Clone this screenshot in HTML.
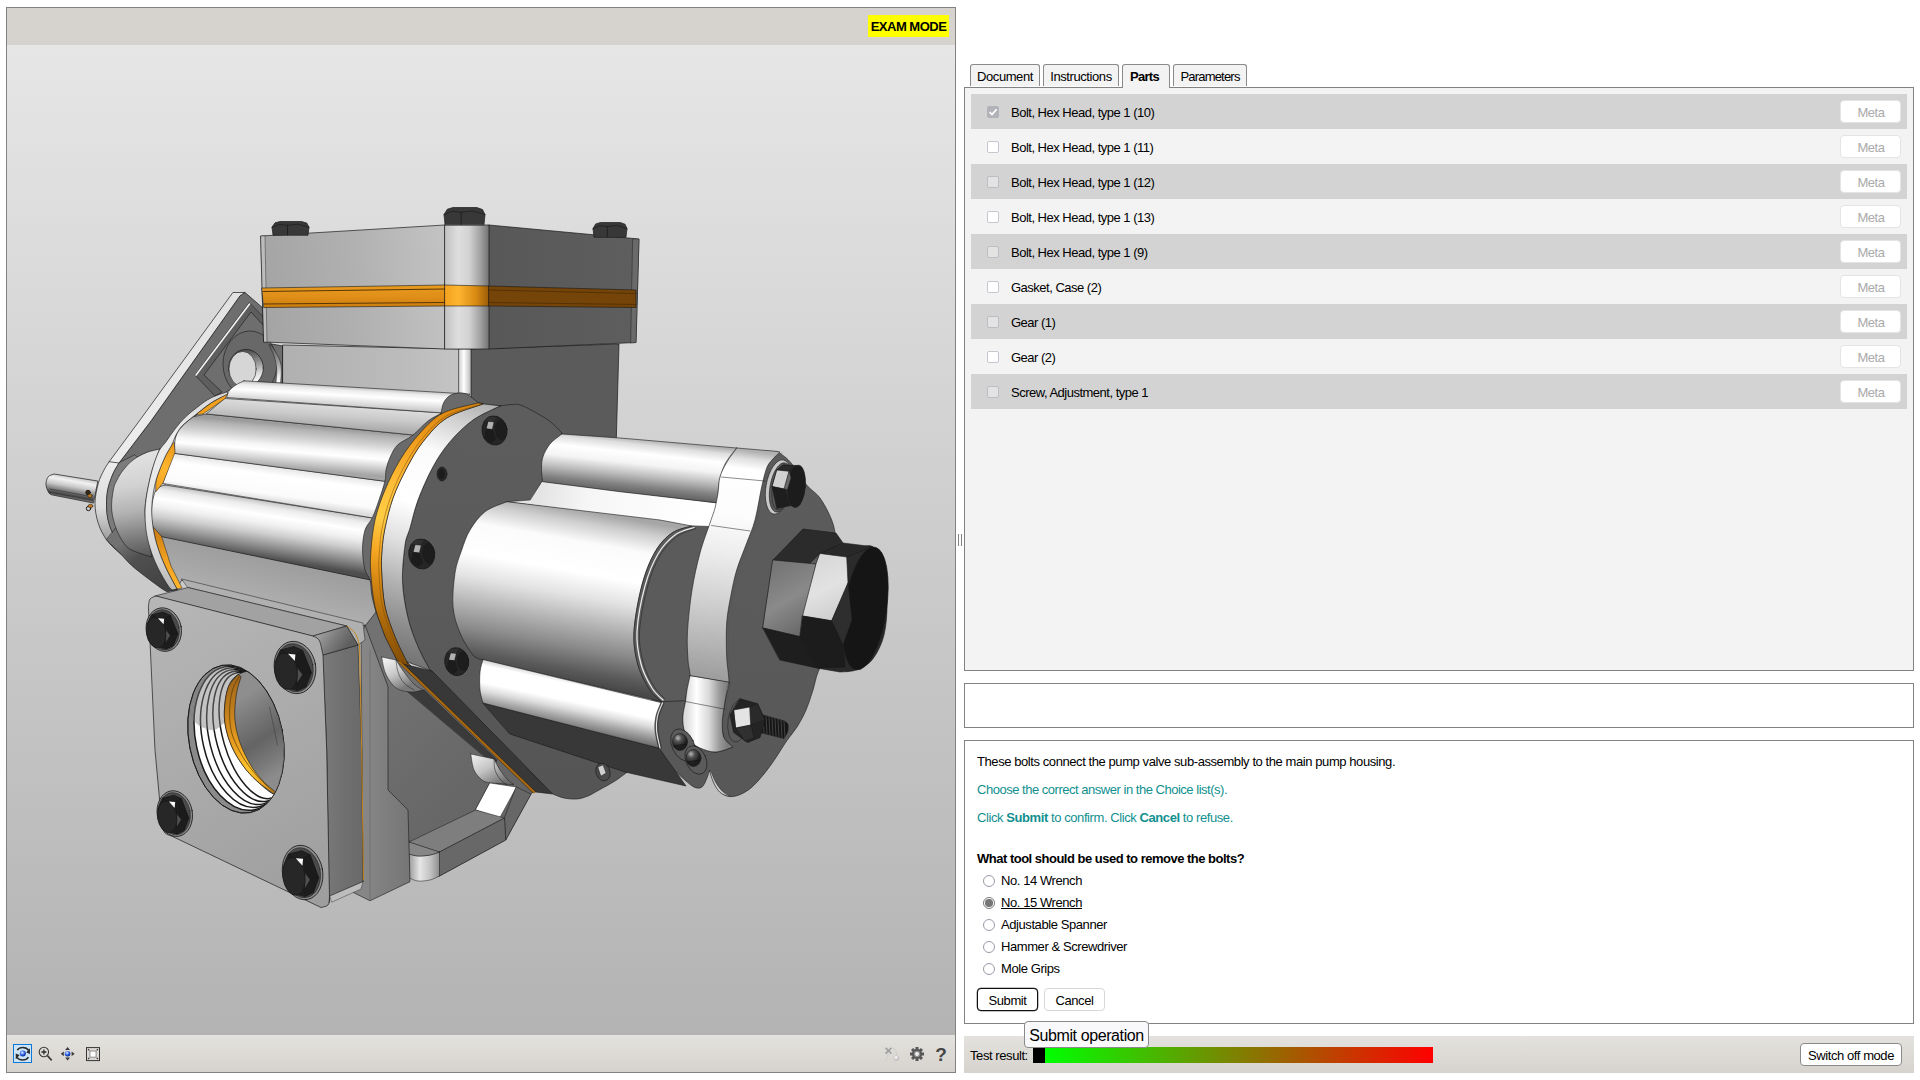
<!DOCTYPE html>
<html lang="en">
<head>
<meta charset="utf-8">
<title>Exam Mode - Pump Assembly</title>
<style>
*{box-sizing:border-box;margin:0;padding:0}
html,body{width:1920px;height:1080px;overflow:hidden;background:#fff}
body{font-family:"Liberation Sans",sans-serif;font-size:13px;letter-spacing:-0.42px;color:#000;position:relative}
.abs{position:absolute}
/* left panel */
#left{position:absolute;left:6px;top:7px;width:950px;height:1066px;border:1px solid #828282;background:#d6d3ce;overflow:hidden}
#lhead{position:absolute;left:0;top:0;width:948px;height:37px;background:#d6d3ce}
#exam{position:absolute;left:861px;top:7px;width:81px;height:22px;background:#ffff00;font-weight:bold;font-size:13px;letter-spacing:-0.5px;line-height:23px;text-align:center;color:#000}
#view{position:absolute;left:0;top:37px;width:948px;height:990px;background:linear-gradient(#e6e6e6,#b3b3b3);overflow:hidden}
#ltool{position:absolute;left:0;top:1027px;width:948px;height:37px;background:linear-gradient(#e4e2de,#d6d3ce)}
#model{position:absolute;left:-7px;top:-45px;width:1920px;height:1080px}
/* splitter */
.grip{position:absolute;top:534px;width:1px;height:12px;background:#808080}
/* tabs */
.tab{position:absolute;top:64px;height:22px;border:1px solid #8a8a8a;border-bottom:none;border-radius:3px 3px 0 0;background:#f3f3f3;line-height:23px;text-align:center;font-size:13px}
.tab.on{height:24px;font-weight:bold;z-index:3;background:#f3f3f3;letter-spacing:-0.55px}
#parts{position:absolute;left:964px;top:87px;width:950px;height:584px;border:1px solid #828282;background:#f3f3f3}
.row{position:absolute;left:6px;width:936px;height:35px}
.row.d{background:#d3d3d3}
.row .cb{position:absolute;left:16px;top:12px;width:12px;height:12px;border:1px solid #c6c6cf;border-radius:2px;background:#fff}
.row.d .cb{background:#e3e3e3;border-color:#bdbdc4}
.row .cb.ck{background:#b2b2b9;border-color:#b2b2b9}
.row .lb{position:absolute;left:40px;top:0;line-height:37px;white-space:nowrap;letter-spacing:-0.5px}
.row .meta{position:absolute;left:869px;top:6px;width:61px;height:23px;border:1px solid #e4e4e4;border-radius:4px;background:#fff;color:#aaa;text-align:center;line-height:23px;text-indent:1px}
.box{position:absolute;left:964px;width:950px;border:1px solid #828282;background:#fff}
.q{position:absolute;left:12px;white-space:nowrap;line-height:16px}
.teal{color:#11908f}
.rad{position:absolute;left:18px;width:12px;height:12px;border:1px solid #9a9aa8;border-radius:50%;background:#fff}
.rad.on{border-color:#7a7a7a}
.rad.on:after{content:"";position:absolute;left:1.3px;top:1.3px;width:7.4px;height:7.4px;border-radius:50%;background:#767676}
.opt{position:absolute;left:36px;white-space:nowrap;line-height:16px}
.btn{position:absolute;height:23px;border:1px solid #d8d8d8;border-radius:4px;background:#fff;text-align:center;line-height:23px;white-space:nowrap}
#rbar{position:absolute;left:964px;top:1036px;width:950px;height:37px;background:linear-gradient(#e4e2de,#d6d3ce)}
#tip{position:absolute;left:1024px;top:1021px;width:125px;height:27px;border:1px solid #8a8a8a;border-radius:4px;background:#f9f9fb;font-size:16px;letter-spacing:-0.4px;line-height:28px;text-align:center;white-space:nowrap;z-index:5}
</style>
</head>
<body>

<!-- ================= LEFT: 3D viewer ================= -->
<div id="left">
  <div id="lhead"><div id="exam">EXAM MODE</div></div>
  <div id="view">
<svg id="model" viewBox="0 0 1920 1080" width="1920" height="1080" stroke-linejoin="round" stroke-linecap="round">
<defs>
<linearGradient id="gFl" gradientUnits="userSpaceOnUse" x1="0" y1="300" x2="0" y2="566"><stop offset="0" stop-color="#e2e2e2"/><stop offset="0.5" stop-color="#ececec"/><stop offset="0.62" stop-color="#ececec"/><stop offset="0.78" stop-color="#dcdcdc"/><stop offset="0.88" stop-color="#a8a8a8"/><stop offset="0.95" stop-color="#747474"/><stop offset="1" stop-color="#555555"/></linearGradient>
<linearGradient id="gHw" gradientUnits="userSpaceOnUse" x1="250" y1="350" x2="256" y2="384"><stop offset="0" stop-color="#505050"/><stop offset="0.35" stop-color="#8a8a8a"/><stop offset="0.7" stop-color="#dcdcdc"/><stop offset="1" stop-color="#ffffff"/></linearGradient>
<linearGradient id="gBs" gradientUnits="userSpaceOnUse" x1="0" y1="345" x2="0" y2="383"><stop offset="0" stop-color="#5a5a5a"/><stop offset="0.45" stop-color="#9a9a9a"/><stop offset="0.8" stop-color="#e8e8e8"/><stop offset="1" stop-color="#ffffff"/></linearGradient>
<linearGradient id="gBl" gradientUnits="userSpaceOnUse" x1="283" y1="360" x2="460" y2="360"><stop offset="0" stop-color="#b0b0b0"/><stop offset="0.7" stop-color="#bcbcbc"/><stop offset="1" stop-color="#c4c4c4"/></linearGradient>
<linearGradient id="gRod" gradientUnits="userSpaceOnUse" x1="459" y1="0" x2="471" y2="0"><stop offset="0" stop-color="#cfcfcf"/><stop offset="0.4" stop-color="#ffffff"/><stop offset="1" stop-color="#b8b8b8"/></linearGradient>
<linearGradient id="gVl" gradientUnits="userSpaceOnUse" x1="261" y1="300" x2="445" y2="280"><stop offset="0" stop-color="#a4a4a4"/><stop offset="0.5" stop-color="#b0b0b0"/><stop offset="1" stop-color="#c2c2c2"/></linearGradient>
<linearGradient id="gVr" gradientUnits="userSpaceOnUse" x1="489" y1="0" x2="639" y2="0"><stop offset="0" stop-color="#585858"/><stop offset="1" stop-color="#5e5e5e"/></linearGradient>
<linearGradient id="gPil" gradientUnits="userSpaceOnUse" x1="445" y1="0" x2="489" y2="0"><stop offset="0" stop-color="#c2c2c2"/><stop offset="0.3" stop-color="#dedede"/><stop offset="0.55" stop-color="#d2d2d2"/><stop offset="0.8" stop-color="#a2a2a2"/><stop offset="1" stop-color="#727272"/></linearGradient>
<linearGradient id="gO1" gradientUnits="userSpaceOnUse" x1="0" y1="286" x2="0" y2="307"><stop offset="0" stop-color="#e69a1e"/><stop offset="0.5" stop-color="#e08f18"/><stop offset="1" stop-color="#cc7e0e"/></linearGradient>
<linearGradient id="gO2" gradientUnits="userSpaceOnUse" x1="445" y1="0" x2="489" y2="0"><stop offset="0" stop-color="#f2a21e"/><stop offset="0.3" stop-color="#ffb530"/><stop offset="0.7" stop-color="#d88a12"/><stop offset="1" stop-color="#9a5c08"/></linearGradient>
<linearGradient id="gPin" gradientUnits="userSpaceOnUse" x1="70" y1="476" x2="66" y2="498"><stop offset="0" stop-color="#c4c4c4"/><stop offset="0.2" stop-color="#f2f2f2"/><stop offset="0.45" stop-color="#c8c8c8"/><stop offset="0.7" stop-color="#7a7a7a"/><stop offset="0.88" stop-color="#3c3c3c"/><stop offset="1" stop-color="#8a8a8a"/></linearGradient>
<linearGradient id="gWedge" gradientUnits="userSpaceOnUse" x1="125" y1="540" x2="160" y2="590"><stop offset="0" stop-color="#727272"/><stop offset="0.35" stop-color="#505050"/><stop offset="1" stop-color="#424242"/></linearGradient>
<linearGradient id="gDome" gradientUnits="userSpaceOnUse" x1="125" y1="455" x2="142" y2="558"><stop offset="0" stop-color="#e2e2e2"/><stop offset="0.3" stop-color="#d2d2d2"/><stop offset="0.55" stop-color="#b2b2b2"/><stop offset="0.8" stop-color="#7c7c7c"/><stop offset="1" stop-color="#565656"/></linearGradient>
<linearGradient id="gFlat" gradientUnits="userSpaceOnUse" x1="200" y1="545" x2="190" y2="590"><stop offset="0" stop-color="#9e9e9e"/><stop offset="1" stop-color="#b0b0b0"/></linearGradient>
<linearGradient id="gR5" gradientUnits="userSpaceOnUse" x1="271.5" y1="501.9" x2="262.6" y2="557.9"><stop offset="0" stop-color="#c4c4c4"/><stop offset="0.1" stop-color="#ececec"/><stop offset="0.25" stop-color="#ffffff"/><stop offset="0.4" stop-color="#f0f0f0"/><stop offset="0.57" stop-color="#cecece"/><stop offset="0.75" stop-color="#9a9a9a"/><stop offset="0.88" stop-color="#747474"/><stop offset="1" stop-color="#4e4e4e"/></linearGradient>
<linearGradient id="gR4" gradientUnits="userSpaceOnUse" x1="282.5" y1="467.7" x2="277.9" y2="502.1"><stop offset="0" stop-color="#e6e6e6"/><stop offset="0.25" stop-color="#ffffff"/><stop offset="0.8" stop-color="#fbfbfb"/><stop offset="1" stop-color="#dedede"/></linearGradient>
<linearGradient id="gR3" gradientUnits="userSpaceOnUse" x1="307.5" y1="426.3" x2="303.9" y2="469.5"><stop offset="0" stop-color="#9c9c9c"/><stop offset="0.1" stop-color="#b4b4b4"/><stop offset="0.3" stop-color="#d2d2d2"/><stop offset="0.5" stop-color="#f6f6f6"/><stop offset="0.62" stop-color="#ffffff"/><stop offset="0.8" stop-color="#d6d6d6"/><stop offset="1" stop-color="#a6a6a6"/></linearGradient>
<linearGradient id="gR2" gradientUnits="userSpaceOnUse" x1="335.5" y1="405.9" x2="334.1" y2="426.3"><stop offset="0" stop-color="#dcdcdc"/><stop offset="0.5" stop-color="#cacaca"/><stop offset="1" stop-color="#aeaeae"/></linearGradient>
<linearGradient id="gR1" gradientUnits="userSpaceOnUse" x1="357" y1="387.5" x2="355.9" y2="406.5"><stop offset="0" stop-color="#c2c2c2"/><stop offset="0.18" stop-color="#ececec"/><stop offset="0.45" stop-color="#ffffff"/><stop offset="0.75" stop-color="#e4e4e4"/><stop offset="1" stop-color="#cccccc"/></linearGradient>
<linearGradient id="gOs1" gradientUnits="userSpaceOnUse" x1="175" y1="445" x2="156" y2="490"><stop offset="0" stop-color="#e89818"/><stop offset="0.5" stop-color="#ffb62e"/><stop offset="1" stop-color="#f0a020"/></linearGradient>
<linearGradient id="gOs2" gradientUnits="userSpaceOnUse" x1="153" y1="528" x2="178" y2="588"><stop offset="0" stop-color="#c87a10"/><stop offset="0.5" stop-color="#f0a020"/><stop offset="1" stop-color="#ffb52c"/></linearGradient>
<linearGradient id="gRing" gradientUnits="userSpaceOnUse" x1="200" y1="400" x2="150" y2="590"><stop offset="0" stop-color="#dcdcdc"/><stop offset="0.2" stop-color="#ececec"/><stop offset="0.6" stop-color="#e8e8e8"/><stop offset="0.85" stop-color="#d0d0d0"/><stop offset="1" stop-color="#b0b0b0"/></linearGradient>
<linearGradient id="gDisc" gradientUnits="userSpaceOnUse" x1="500" y1="410" x2="470" y2="780"><stop offset="0" stop-color="#5d5d5d"/><stop offset="0.6" stop-color="#5a5a5a"/><stop offset="1" stop-color="#555555"/></linearGradient>
<linearGradient id="gBand" gradientUnits="userSpaceOnUse" x1="490" y1="405" x2="400" y2="670"><stop offset="0" stop-color="#b0b0b0"/><stop offset="0.1" stop-color="#d4d4d4"/><stop offset="0.22" stop-color="#fbfbfb"/><stop offset="0.42" stop-color="#ffffff"/><stop offset="0.56" stop-color="#e0e0e0"/><stop offset="0.7" stop-color="#b4b4b4"/><stop offset="0.85" stop-color="#8c8c8c"/><stop offset="1" stop-color="#6c6c6c"/></linearGradient>
<linearGradient id="gORing" gradientUnits="userSpaceOnUse" x1="440" y1="405" x2="380" y2="665"><stop offset="0" stop-color="#d88610"/><stop offset="0.15" stop-color="#f09c1c"/><stop offset="0.33" stop-color="#ffbe38"/><stop offset="0.46" stop-color="#ffcc44"/><stop offset="0.58" stop-color="#f6a824"/><stop offset="0.7" stop-color="#d48612"/><stop offset="0.85" stop-color="#a8660a"/><stop offset="1" stop-color="#7e4a06"/></linearGradient>
<linearGradient id="gED" gradientUnits="userSpaceOnUse" x1="780" y1="460" x2="760" y2="790"><stop offset="0" stop-color="#5c5c5c"/><stop offset="1" stop-color="#585858"/></linearGradient>
<linearGradient id="gWeb" gradientUnits="userSpaceOnUse" x1="540" y1="495" x2="700" y2="520"><stop offset="0" stop-color="#e4e4e4"/><stop offset="0.3" stop-color="#f6f6f6"/><stop offset="1" stop-color="#ffffff"/></linearGradient>
<linearGradient id="gUC" gradientUnits="userSpaceOnUse" x1="640" y1="439" x2="634" y2="494"><stop offset="0" stop-color="#b0b0b0"/><stop offset="0.1" stop-color="#dedede"/><stop offset="0.26" stop-color="#ffffff"/><stop offset="0.45" stop-color="#f4f4f4"/><stop offset="0.66" stop-color="#bcbcbc"/><stop offset="0.85" stop-color="#828282"/><stop offset="1" stop-color="#606060"/></linearGradient>
<linearGradient id="gCC" gradientUnits="userSpaceOnUse" x1="590" y1="512" x2="560" y2="680"><stop offset="0" stop-color="#a6a6a6"/><stop offset="0.07" stop-color="#cecece"/><stop offset="0.18" stop-color="#fbfbfb"/><stop offset="0.36" stop-color="#ffffff"/><stop offset="0.5" stop-color="#e2e2e2"/><stop offset="0.65" stop-color="#b4b4b4"/><stop offset="0.8" stop-color="#888888"/><stop offset="0.93" stop-color="#5a5a5a"/><stop offset="1" stop-color="#484848"/></linearGradient>
<linearGradient id="gLC" gradientUnits="userSpaceOnUse" x1="575" y1="680" x2="565" y2="727"><stop offset="0" stop-color="#d8d8d8"/><stop offset="0.1" stop-color="#ffffff"/><stop offset="0.45" stop-color="#ffffff"/><stop offset="0.62" stop-color="#dcdcdc"/><stop offset="0.8" stop-color="#a6a6a6"/><stop offset="1" stop-color="#707070"/></linearGradient>
<linearGradient id="gPl" gradientUnits="userSpaceOnUse" x1="740" y1="450" x2="700" y2="750"><stop offset="0" stop-color="#b2b2b2"/><stop offset="0.025" stop-color="#dedede"/><stop offset="0.06" stop-color="#ffffff"/><stop offset="0.22" stop-color="#fcfcfc"/><stop offset="0.35" stop-color="#ececec"/><stop offset="0.5" stop-color="#d2d2d2"/><stop offset="0.65" stop-color="#b4b4b4"/><stop offset="0.755" stop-color="#9e9e9e"/><stop offset="0.765" stop-color="#9e9e9e"/><stop offset="0.77" stop-color="#ffffff"/><stop offset="0.845" stop-color="#b4b4b4"/><stop offset="0.85" stop-color="#ffffff"/><stop offset="0.92" stop-color="#d0d0d0"/><stop offset="1" stop-color="#848484"/></linearGradient>
<linearGradient id="gLug" gradientUnits="userSpaceOnUse" x1="686" y1="0" x2="728" y2="0"><stop offset="0" stop-color="#dcdcdc"/><stop offset="0.25" stop-color="#ffffff"/><stop offset="0.55" stop-color="#d8d8d8"/><stop offset="0.8" stop-color="#9a9a9a"/><stop offset="1" stop-color="#7a7a7a"/></linearGradient>
<linearGradient id="gCap" gradientUnits="userSpaceOnUse" x1="845" y1="560" x2="890" y2="640"><stop offset="0" stop-color="#2c2c2c"/><stop offset="0.5" stop-color="#242424"/><stop offset="1" stop-color="#2a2a2a"/></linearGradient>
<linearGradient id="gHx1" gradientUnits="userSpaceOnUse" x1="770" y1="570" x2="805" y2="630"><stop offset="0" stop-color="#767676"/><stop offset="0.5" stop-color="#8a8a8a"/><stop offset="1" stop-color="#6a6a6a"/></linearGradient>
<linearGradient id="gHx2" gradientUnits="userSpaceOnUse" x1="815" y1="560" x2="840" y2="615"><stop offset="0" stop-color="#d8d8d8"/><stop offset="0.5" stop-color="#e2e2e2"/><stop offset="1" stop-color="#cfcfcf"/></linearGradient>
<radialGradient id="gBall" gradientUnits="userSpaceOnUse" cx="678" cy="738" r="9"><stop offset="0" stop-color="#b8b8b8"/><stop offset="0.4" stop-color="#555555"/><stop offset="1" stop-color="#1e1e1e"/></radialGradient>
<radialGradient id="gBall2" gradientUnits="userSpaceOnUse" cx="691" cy="754" r="9"><stop offset="0" stop-color="#b8b8b8"/><stop offset="0.4" stop-color="#555555"/><stop offset="1" stop-color="#1e1e1e"/></radialGradient>
<linearGradient id="gLB" gradientUnits="userSpaceOnUse" x1="390" y1="680" x2="520" y2="800"><stop offset="0" stop-color="#727272"/><stop offset="0.5" stop-color="#6a6a6a"/><stop offset="1" stop-color="#646464"/></linearGradient>
<linearGradient id="gBo1" gradientUnits="userSpaceOnUse" x1="385" y1="660" x2="400" y2="690"><stop offset="0" stop-color="#f0f0f0"/><stop offset="0.5" stop-color="#c8c8c8"/><stop offset="1" stop-color="#7a7a7a"/></linearGradient>
<linearGradient id="gBo2" gradientUnits="userSpaceOnUse" x1="470" y1="755" x2="490" y2="790"><stop offset="0" stop-color="#f2f2f2"/><stop offset="0.5" stop-color="#c4c4c4"/><stop offset="1" stop-color="#707070"/></linearGradient>
<linearGradient id="gFt" gradientUnits="userSpaceOnUse" x1="409" y1="0" x2="440" y2="0"><stop offset="0" stop-color="#9a9a9a"/><stop offset="0.35" stop-color="#e6e6e6"/><stop offset="0.7" stop-color="#c0c0c0"/><stop offset="1" stop-color="#8a8a8a"/></linearGradient>
<linearGradient id="gBP" gradientUnits="userSpaceOnUse" x1="365" y1="0" x2="410" y2="0"><stop offset="0" stop-color="#868686"/><stop offset="1" stop-color="#767676"/></linearGradient>
<linearGradient id="gPS" gradientUnits="userSpaceOnUse" x1="323" y1="0" x2="363" y2="0"><stop offset="0" stop-color="#7a7a7a"/><stop offset="0.5" stop-color="#707070"/><stop offset="1" stop-color="#6a6a6a"/></linearGradient>
<linearGradient id="gPC" gradientUnits="userSpaceOnUse" x1="320" y1="632" x2="345" y2="650"><stop offset="0" stop-color="#a0a0a0"/><stop offset="0.5" stop-color="#7c7c7c"/><stop offset="1" stop-color="#5e5e5e"/></linearGradient>
<linearGradient id="gPF" gradientUnits="userSpaceOnUse" x1="160" y1="600" x2="330" y2="900"><stop offset="0" stop-color="#b6b6b6"/><stop offset="0.5" stop-color="#aaaaaa"/><stop offset="1" stop-color="#9e9e9e"/></linearGradient>
<clipPath id="cHole"><ellipse cx="236" cy="739" rx="46.6" ry="74.6" transform="rotate(-11 236 739)"/></clipPath>
<linearGradient id="gBore" gradientUnits="userSpaceOnUse" x1="238" y1="700" x2="284" y2="770"><stop offset="0" stop-color="#8e8e8e"/><stop offset="0.3" stop-color="#767676"/><stop offset="0.55" stop-color="#646464"/><stop offset="0.8" stop-color="#787878"/><stop offset="1" stop-color="#8c8c8c"/></linearGradient>
<linearGradient id="gSeal" gradientUnits="userSpaceOnUse" x1="232" y1="680" x2="266" y2="790"><stop offset="0" stop-color="#a0661a"/><stop offset="0.3" stop-color="#c8841c"/><stop offset="0.55" stop-color="#eaa020"/><stop offset="0.78" stop-color="#ffc42c"/><stop offset="1" stop-color="#e09a1e"/></linearGradient>
</defs>
<path d="M245 292.5L264 309L266 343L283 346L283 384L232 388C226.7 392 210 403.3 200 412C190 420.7 178.7 433.8 172 440C165.3 446.2 164.2 446.9 160 449C155.8 451.1 151.2 450.7 146.7 452.5C142.2 454.3 136.9 457.1 133 460C129.1 462.9 125.7 466.4 123 470C120.3 473.6 118.5 477.5 116.7 481.7C115 485.9 113.5 489.9 112.5 495C111.5 500.1 110.9 506.2 111 512C111.1 517.8 112.7 527 113 530L107 528C107 525 106.6 516.2 106.7 510C106.8 503.8 106.5 496.8 107.5 491C108.5 485.2 110.6 479.7 112.5 475C114.4 470.3 117.9 465 119 463L151.7 420L240 295.8Z" fill="#6e6e6e" stroke="#1a1a1a" stroke-width="0.7"/>
<path d="M233.3 292.5L245 292.5L240 295.8L151.7 420L119 463C117.9 465 114.4 470.3 112.5 475C110.6 479.7 108.5 485.2 107.5 491C106.5 496.8 106.3 504.1 106.7 510C107.1 516 108.1 521.2 110 526.7C111.9 532.2 115.5 538.9 118.3 543.3C121.1 547.7 124.2 550.2 126.7 553.3C129.2 556.4 131.9 560.5 133 562C130.8 560.5 124.4 557 120 553.3C115.6 549.6 110.3 545 106.7 540C103.1 535 100.2 529.4 98.3 523.3C96.3 517.2 95 510 95 503.3C95 496.6 96.8 488.9 98.3 483.3C99.8 477.8 102.2 473.6 104 470C105.8 466.4 108.3 463.1 109.2 461.7L140 420Z" fill="url(#gFl)" stroke="#1a1a1a" stroke-width="0.7"/>
<path d="M109.2 461.7L119 463" fill="none" stroke="#1a1a1a" stroke-width="0.7"/>
<path d="M249 303L195 375L215 396L222 392L204 375L251 312L264 326L264 318Z" fill="#5e5e5e" stroke="#1a1a1a" stroke-width="0.6"/>
<path d="M249.5 304L196 375" fill="none" stroke="#f2f2f2" stroke-width="1.6"/>
<ellipse cx="250" cy="364" rx="27" ry="33" fill="#686868" stroke="#1a1a1a" stroke-width="0.6"/>
<ellipse cx="246" cy="368" rx="17.3" ry="18.6" fill="url(#gHw)" stroke="#1a1a1a" stroke-width="0.7"/>
<ellipse cx="242.6" cy="369" rx="13.6" ry="17.6" fill="#d6d6d6" stroke="#1a1a1a" stroke-width="0.6"/>
<path d="M269 345C269.8 346.8 272.7 352 274 356C275.3 360 276.4 364.5 276.7 369C277 373.5 276.1 380.7 276 383L280.6 383C280.7 380.7 281.5 373 281.3 369C281.1 365 280.9 363 279.3 359C277.7 355 272.8 347.3 271.5 345Z" fill="url(#gBs)" stroke="#1a1a1a" stroke-width="0.5"/>
<path d="M283 345L460 349L460 396L283 386Z" fill="url(#gBl)" stroke="#1a1a1a" stroke-width="0.7"/>
<path d="M471 349L619 344L616 450L560 470L471 420Z" fill="#5b5b5b" stroke="#1a1a1a" stroke-width="0.7"/>
<path d="M459 349L471 349L471 398L459 396Z" fill="url(#gRod)" stroke="#1a1a1a" stroke-width="0.6"/>
<path d="M261 236L445 225L445 349L264 342Z" fill="url(#gVl)" stroke="#1a1a1a" stroke-width="0.7"/>
<path d="M261 236L265 236L267 342L264 342Z" fill="#bcbcbc" stroke="#1a1a1a" stroke-width="0.4"/>
<path d="M489 225L639 239L636 342.5L489 349Z" fill="url(#gVr)" stroke="#1a1a1a" stroke-width="0.7"/>
<path d="M633 239L639 239L636 342.5L631 343Z" fill="#6a6a6a" stroke="#1a1a1a" stroke-width="0.4"/>
<path d="M445 225L489 225L489 349L445 349Z" fill="url(#gPil)" stroke="#1a1a1a" stroke-width="0.7"/>
<path d="M262 288L445 285L445 306L264 307.5Z" fill="url(#gO1)" stroke="#1a1a1a" stroke-width="0.6"/>
<path d="M263 291.5L445 289" fill="none" stroke="#5a3606" stroke-width="1.0"/>
<path d="M264 304L445 302.5" fill="none" stroke="#5a3606" stroke-width="1.0"/>
<path d="M445 285L489 286L489 306L445 306Z" fill="url(#gO2)" stroke="#1a1a1a" stroke-width="0.6"/>
<path d="M489 286L636 290L636 307.5L489 306Z" fill="#744408" stroke="#1a1a1a" stroke-width="0.6"/>
<path d="M489 290L636 293.5" fill="none" stroke="#3a2000" stroke-width="0.5"/>
<path d="M489 302.5L636 304.5" fill="none" stroke="#3a2000" stroke-width="0.5"/>
<path d="M273 235L272 227.2L275 222.8L280.1 221.5L301.6 221.5L306.8 223.1L309 227.2L308 235Z" fill="#383838" stroke="#1a1a1a" stroke-width="0.7"/>
<path d="M287.5 225.3L287.5 235" fill="none" stroke="#111" stroke-width="0.6"/>
<path d="M272 227.2L279.4 224.5L287.5 225.3L297.9 224.2L309 227.2" fill="none" stroke="#111" stroke-width="0.5"/>
<path d="M445 224.5L444 214.6L447.3 209.2L453 207.5L476.8 207.5L482.5 209.5L485 214.6L484 224.5Z" fill="#383838" stroke="#1a1a1a" stroke-width="0.7"/>
<path d="M461.2 212.3L461.2 224.5" fill="none" stroke="#111" stroke-width="0.6"/>
<path d="M444 214.6L452.2 211.2L461.2 212.3L472.7 210.9L485 214.6" fill="none" stroke="#111" stroke-width="0.5"/>
<path d="M594 237L593 228.6L595.7 223.9L600.5 222.5L620.2 222.5L625 224.2L627 228.6L626 237Z" fill="#383838" stroke="#1a1a1a" stroke-width="0.7"/>
<path d="M607.3 226.6L607.3 237" fill="none" stroke="#111" stroke-width="0.6"/>
<path d="M593 228.6L599.8 225.7L607.3 226.6L616.8 225.4L627 228.6" fill="none" stroke="#111" stroke-width="0.5"/>
<path d="M97.5 481L54 474C53 474.5 49.3 475.2 48 477C46.7 478.8 45.8 482.3 46 485C46.2 487.7 47.9 491.3 49 493C50.1 494.7 51.9 494.7 52.5 495L93 503Z" fill="url(#gPin)" stroke="#1a1a1a" stroke-width="0.7"/>
<path d="M50 489L88 496" fill="none" stroke="#333" stroke-width="0.6"/>
<ellipse cx="88" cy="492.5" rx="2.2" ry="2.2" fill="#3a2a10" stroke="#1a1a1a" stroke-width="1.0"/>
<ellipse cx="90" cy="495.8" rx="2.2" ry="1.8" fill="#c07818" stroke="#1a1a1a" stroke-width="0.5"/>
<ellipse cx="88.5" cy="508.5" rx="2.2" ry="2.2" fill="none" stroke="#1a1a1a" stroke-width="1.0"/>
<ellipse cx="90.5" cy="506" rx="2.4" ry="1.8" fill="#c07818" stroke="#1a1a1a" stroke-width="0.5"/>
<path d="M119 463C117.9 465 114.4 470.3 112.5 475C110.6 479.7 108.5 485.2 107.5 491C106.5 496.8 106.3 504.1 106.7 510C107.1 516 108.1 521.2 110 526.7C111.9 532.2 115.5 538.9 118.3 543.3C121.1 547.7 125.3 551.6 126.7 553.3L150 560L150 470L135 455Z" fill="#7c7c7c" stroke="#1a1a1a" stroke-width="0.5"/>
<path d="M106.7 540C108.9 542.2 115.6 548.8 120 553.3C124.4 557.8 126.9 561.4 133 566.7C139.1 572 151.1 580.8 156.7 585C162.3 589.2 165 590.6 166.7 591.7L178 590L158 552L116 528Z" fill="url(#gWedge)" stroke="#1a1a1a" stroke-width="0.6"/>
<path d="M160 449C157.8 449.6 151.2 450.7 146.7 452.5C142.2 454.3 136.9 457.1 133 460C129.1 462.9 126 466.7 123.3 470C120.6 473.3 118.7 476.7 117 480C115.3 483.3 114.2 485 113.3 490C112.4 495 111.1 503.3 111.7 510C112.3 516.7 114.2 523.9 116.7 530C119.2 536.1 122.8 542.8 126.7 546.7C130.6 550.6 135.8 551.6 140 553.3C144.2 555 150 556.4 152 557C151.2 552.5 148.2 537.5 147 530C145.8 522.5 145.1 517.8 145 512C144.9 506.2 145.6 501.7 146.7 495C147.8 488.3 149.7 478.9 151.7 471.7C153.7 464.5 157.1 455.8 158.5 452C159.9 448.2 159.8 449.5 160 449Z" fill="url(#gDome)" stroke="#1a1a1a" stroke-width="0.6"/>
<path d="M161 536L374 580.5L377 612L366 626L181.7 580L176 590L170 575Z" fill="url(#gFlat)" stroke="#1a1a1a" stroke-width="0.6"/>
<path d="M165 485L378 518.8L374 580.7L161.7 536.7C160.2 535.2 154.7 532.8 153 528C151.3 523.2 151.2 514.3 151.7 508C152.2 501.7 153.8 493.8 156 490C158.2 486.2 163.5 485.8 165 485Z" fill="url(#gR5)" stroke="#1a1a1a" stroke-width="0.6"/>
<path d="M174 453.3L391 482.1L378 518.8L163 483.5Z" fill="url(#gR4)" stroke="#1a1a1a" stroke-width="0.6"/>
<path d="M193 416.7L206.7 414L422 435.9L391 482.1L174 453.3C174.3 450.5 174.5 441.1 175.8 436.7C177.1 432.3 178.8 430 181.7 426.7C184.6 423.4 191.1 418.4 193 416.7Z" fill="url(#gR3)" stroke="#1a1a1a" stroke-width="0.6"/>
<path d="M225 398.5L446 413.2L422 435.9L206.7 414Z" fill="url(#gR2)" stroke="#1a1a1a" stroke-width="0.6"/>
<path d="M244 380.8L470 394.1L446 413.2L226.7 397.5C227.1 396.4 227.5 393.1 229 391C230.5 388.9 233.3 386.7 235.8 385C238.3 383.3 242.6 381.5 244 380.8Z" fill="url(#gR1)" stroke="#1a1a1a" stroke-width="0.6"/>
<path d="M441 413.5C441.5 411.6 442.2 405.2 444 402C445.8 398.8 448.5 395.9 452 394.5C455.5 393.1 460.7 392.2 465 393.5C469.3 394.8 475.8 401 478 402.5L483 404L446.7 418L441 413.5Z" fill="#6a6a6a" stroke="#1a1a1a" stroke-width="0.6"/>
<path d="M441 413.5C438.8 414.8 432.8 417.3 428 421C423.2 424.7 417.6 431.5 412.5 435.5C407.4 439.5 401.2 441.3 397.5 445C393.8 448.7 391.9 453.3 390 457.5C388.1 461.7 386.8 466.1 386 470C385.2 473.9 386.2 476 385 481C383.8 486 381.1 493.9 379 500C376.9 506.1 374.8 512.5 372.5 517.5C370.2 522.5 366.7 524.6 365 530C363.3 535.4 362.5 543.3 362.5 550C362.5 556.7 363.8 565 365 570C366.2 575 368.8 575.7 370 580C371.2 584.3 371 590.7 372 596C373 601.3 375.3 609.3 376 612L386 612C385.3 605.5 382.4 583.3 381.7 573C381 562.7 381.4 557.5 382 550C382.6 542.5 383.2 536.7 385 528C386.8 519.3 389.4 508 393 498C396.6 488 401.7 477.4 406.7 468C411.7 458.6 416.3 450 423 441.7C429.7 433.4 442.8 421.9 446.7 418Z" fill="#6a6a6a" stroke="#1a1a1a" stroke-width="0.6"/>
<path d="M227.5 394L225 398.7L203 414L195.8 414.6L210.8 403Z" fill="#f0a01c" stroke="#1a1a1a" stroke-width="0.5"/>
<path d="M174 442.5C173.6 442.9 173.2 442.6 171.7 445C170.2 447.4 167.5 451.5 165 457C162.5 462.5 158.2 472.2 156.7 478C155.2 483.8 156 489.4 155.8 491.7L163 483L175 452.5Z" fill="url(#gOs1)" stroke="#1a1a1a" stroke-width="0.5"/>
<path d="M153 527C153.7 530 155 538.5 157 545C159 551.5 161.7 558.7 165 566C168.3 573.3 175 585.2 177 589L182 588L171 566L161.7 536.7Z" fill="url(#gOs2)" stroke="#1a1a1a" stroke-width="0.5"/>
<path d="M226.7 392C224 393 215.6 395.6 210.8 398C206 400.4 202.2 403.5 198 406.7C193.8 409.9 189.3 413.3 185.5 417C181.7 420.7 178.2 424.9 175 429C171.8 433.1 168.8 437.9 166 441.7C163.2 445.5 160.9 447 158.5 452C156.1 457 153.7 464.5 151.7 471.7C149.7 478.9 147.8 488.3 146.7 495C145.6 501.7 145.1 506.2 145 512C144.9 517.8 145.2 524 146 530C146.8 536 148.2 542 150 548C151.8 554 154.2 560 157 566C159.8 572 164.5 580 167 584C169.5 588 171.2 589 172 590L177 589C175 585.2 168.3 573.3 165 566C161.7 558.7 159 551.5 157 545C155 538.5 153.9 532.8 153 527C152.1 521.2 151.7 515.3 151.7 510C151.7 504.7 152.2 500.3 153 495C153.8 489.7 154.7 484.3 156.7 478C158.7 471.7 162.5 462.5 165 457C167.5 451.5 169.8 448.8 171.7 445C173.6 441.2 174.6 437.3 176.5 434C178.4 430.7 179.8 428.2 183 425C186.2 421.8 191.2 418.3 195.8 414.6C200.4 410.9 205.5 406.4 210.8 403C216.1 399.6 224.7 395.5 227.5 394Z" fill="url(#gRing)" stroke="#1a1a1a" stroke-width="0.6"/>
<path d="M500 406C502 405.8 508.2 404.5 512 404.5C515.8 404.5 517 403.4 523 406C529 408.6 541.5 415.5 548 420C554.5 424.5 559.7 430.8 562 433L560 520L480 640L630 770C627.5 771.8 620 777.8 615 781C610 784.2 604.5 787 600 789.5C595.5 792 591.9 794.4 588 796C584.1 797.6 580.7 798.7 576.7 799C572.7 799.3 568 798.8 564 798C560 797.2 554.5 794.7 552.6 794L432 671C431.7 670.8 432.3 674 430 670C427.7 666 421.7 655.4 418 646.7C414.3 638 410.6 628.8 408 618C405.4 607.2 403 593.9 402.5 581.7C402 569.5 403.8 554 405 545C406.2 536 407.8 535.5 410 528C412.2 520.5 414.2 510.2 418 500C421.8 489.8 427.7 476.4 433 466.7C438.3 457 443.3 449.5 450 441.7C456.7 433.9 464.7 425.9 473 420C481.3 414.1 495.5 408.3 500 406Z" fill="url(#gDisc)" stroke="#1a1a1a" stroke-width="0.6"/>
<path d="M483 404C476.9 406.3 456.7 411.7 446.7 418C436.7 424.3 429.7 433.4 423 441.7C416.3 450 411.7 458.6 406.7 468C401.7 477.4 396.6 488 393 498C389.4 508 386.8 519.3 385 528C383.2 536.7 382.6 542.5 382 550C381.4 557.5 381.2 563.5 381.7 573C382.2 582.5 382.8 596.1 385 606.7C387.2 617.3 391.4 627.5 395 636.7C398.6 645.9 404.8 657.5 406.7 661.7L432 671C431.7 670.8 432.3 674 430 670C427.7 666 421.7 655.4 418 646.7C414.3 638 410.6 628.8 408 618C405.4 607.2 403 593.9 402.5 581.7C402 569.5 403.8 554 405 545C406.2 536 407.8 535.5 410 528C412.2 520.5 414.2 510.2 418 500C421.8 489.8 427.7 476.4 433 466.7C438.3 457 443.3 449.5 450 441.7C456.7 433.9 464.7 425.9 473 420C481.3 414.1 495.5 408.3 500 406Z" fill="url(#gBand)" stroke="#1a1a1a" stroke-width="0.6"/>
<path d="M478 403C472.2 404.7 452.7 408 443 413C433.3 418 427.2 425.2 420 433C412.8 440.8 405.8 450.5 400 460C394.2 469.5 389.2 480 385 490C380.8 500 377.3 510 375 520C372.7 530 371.7 541.2 371 550C370.3 558.8 370.1 563.5 370.8 573C371.5 582.5 372.6 596.1 375 606.7C377.4 617.3 381.4 627.8 385 636.7C388.6 645.6 393.7 655 396.7 660C399.7 665 401.9 665.6 403 666.7L533 791.7L536 791.5L407 662C406.9 662 408.7 665.9 406.7 661.7C404.7 657.5 398.6 645.9 395 636.7C391.4 627.5 387.2 617.3 385 606.7C382.8 596.1 382.2 582.5 381.7 573C381.2 563.5 381.4 557.5 382 550C382.6 542.5 383.2 536.7 385 528C386.8 519.3 389.4 508 393 498C396.6 488 401.7 477.4 406.7 468C411.7 458.6 416.3 450 423 441.7C429.7 433.4 436.7 424.3 446.7 418C456.7 411.7 476.9 406.3 483 404Z" fill="url(#gORing)" stroke="#1a1a1a" stroke-width="0.6"/>
<path d="M481 404.5C475.1 406.5 455.3 410.8 445.5 416.5C435.7 422.2 428.8 430.8 422 439C415.2 447.2 409.7 456.5 404.5 466C399.3 475.5 394.7 486 391 496C387.3 506 384.4 517 382.5 526C380.6 535 380.1 542.2 379.5 550C378.9 557.8 378.5 563.5 379 573C379.5 582.5 380.2 596.1 382.5 606.7C384.8 617.3 388.9 627.5 392.5 636.7C396.1 645.9 402.1 657.5 404 661.7" fill="none" stroke="#7a4a08" stroke-width="0.5"/>
<ellipse cx="494.5" cy="430.5" rx="12.5" ry="14.6" fill="#262626" stroke="#1a1a1a" stroke-width="0.8" transform="rotate(-8 494.5 430.5)"/>
<path d="M483.8 421.7L489 416.5L497.4 416.5L494 422L488.3 421.4Z" fill="#303030" stroke="#1a1a1a" stroke-width="0.4"/>
<path d="M488.3 421.4L494 422L492.2 429.5L486.4 428.8Z" fill="#b2b2b2" stroke="#1a1a1a" stroke-width="0.4"/>
<path d="M486.4 428.8L492.2 429.5L495.5 439.2L490.9 443L484.4 438.6Z" fill="#1c1c1c" stroke="#1a1a1a" stroke-width="0.4"/>
<ellipse cx="501.2" cy="430" rx="5.8" ry="9.7" fill="#1d1d1d" stroke="#1a1a1a" stroke-width="0.5" transform="rotate(-6 501.2 430)"/>
<ellipse cx="421.7" cy="554" rx="13" ry="15" fill="#262626" stroke="#1a1a1a" stroke-width="0.8" transform="rotate(-8 421.7 554)"/>
<path d="M410.6 545L416 539.6L424.7 539.6L421.2 545.3L415.3 544.7Z" fill="#303030" stroke="#1a1a1a" stroke-width="0.4"/>
<path d="M415.3 544.7L421.2 545.3L419.3 553L413.3 552.3Z" fill="#b2b2b2" stroke="#1a1a1a" stroke-width="0.4"/>
<path d="M413.3 552.3L419.3 553L422.7 562.9L418 566.8L411.2 562.3Z" fill="#1c1c1c" stroke="#1a1a1a" stroke-width="0.4"/>
<ellipse cx="428.7" cy="553.5" rx="6" ry="10" fill="#1d1d1d" stroke="#1a1a1a" stroke-width="0.5" transform="rotate(-6 428.7 553.5)"/>
<ellipse cx="456.7" cy="661.7" rx="12" ry="14" fill="#262626" stroke="#1a1a1a" stroke-width="0.8" transform="rotate(-8 456.7 661.7)"/>
<path d="M446.4 653.3L451.4 648.3L459.5 648.3L456.2 653.5L450.7 653Z" fill="#303030" stroke="#1a1a1a" stroke-width="0.4"/>
<path d="M450.7 653L456.2 653.5L454.5 660.7L448.9 660.1Z" fill="#b2b2b2" stroke="#1a1a1a" stroke-width="0.4"/>
<path d="M448.9 660.1L454.5 660.7L457.7 670L453.2 673.7L447 669.5Z" fill="#1c1c1c" stroke="#1a1a1a" stroke-width="0.4"/>
<ellipse cx="463.1" cy="661.2" rx="5.6" ry="9.3" fill="#1d1d1d" stroke="#1a1a1a" stroke-width="0.5" transform="rotate(-6 463.1 661.2)"/>
<ellipse cx="442" cy="474" rx="5" ry="7" fill="#2a2a2a" stroke="#1a1a1a" stroke-width="0.6"/>
<ellipse cx="441.6" cy="474" rx="3.4" ry="5.4" fill="#1c1c1c"/>
<path d="M778 452C780 453.6 785.2 456.2 790 461.7C794.8 467.2 801.7 478.9 806.7 485C811.7 491.1 815.8 492.2 820 498C824.2 503.8 829 513 831.7 520C834.4 527 834.8 530.8 836 540C837.2 549.2 838.7 562.5 839 575C839.3 587.5 839.5 602.5 838 615C836.5 627.5 833.3 640.6 830 650C826.7 659.4 821.1 664.8 818.3 671.5C815.5 678.2 815.1 683.5 813 690C810.9 696.5 808.4 704.6 805.7 710.8C803 717 800.1 722 797 727C793.9 732 790.1 735.9 786.8 740.7C783.5 745.5 780.1 751.3 777 756C773.9 760.7 771.1 764.8 767.9 769C764.7 773.2 761.1 777.6 758 781C754.9 784.4 752.2 787.2 749 789.5C745.8 791.8 742.2 793.8 739 795C735.8 796.2 732.8 796.8 730 796.6C727.2 796.4 724.6 795.2 722.5 794C720.4 792.8 719.2 791.7 717.6 789.5C716 787.3 714.3 784.1 713 781C711.7 777.9 710.2 772.3 709.7 770.6C708.6 773.2 705.5 783.2 703 786C700.5 788.8 697.8 788.3 695 787.5C692.2 786.7 687.5 782.1 686 781L652 750L652 700L690 600L740 450Z" fill="url(#gED)" stroke="#1a1a1a" stroke-width="0.6"/>
<path d="M709.7 770.6C710.2 772.3 711.7 777.9 713 781C714.3 784.1 716 787.3 717.6 789.5C719.2 791.7 720.4 792.8 722.5 794C724.6 795.2 728.8 796.2 730 796.6C728.7 795.7 724.3 793.3 722 791C719.7 788.7 717.8 786 716 783C714.2 780 712.5 775.1 711.5 773C710.5 770.9 710 771 709.7 770.6Z" fill="#d0d0d0" stroke="#1a1a1a" stroke-width="0.4"/>
<path d="M483 703L659 748L686 786L625 772L510 734Z" fill="#383838" stroke="#1a1a1a" stroke-width="0.6"/>
<path d="M542.5 481L718 503L712 527L692 527L507 501.7L530 500Z" fill="url(#gWeb)" stroke="#1a1a1a" stroke-width="0.5"/>
<path d="M561.7 434L620 438L736.7 448C734.8 450.7 728 458 725 464C722 470 720.2 477.5 719 484C717.8 490.5 718.2 499.8 718 503L620 491.7L542.5 481.7C542.3 479.4 541.4 472.2 541.5 468C541.6 463.8 541.6 460.7 543 456.7C544.4 452.7 546.9 447.8 550 444C553.1 440.2 559.8 435.7 561.7 434Z" fill="url(#gUC)" stroke="#1a1a1a" stroke-width="0.6"/>
<path d="M506.7 501.7L660 520L692 526C688.7 527.2 678.2 528.7 672 533C665.8 537.3 660 543.3 655 552C650 560.7 645.5 571.7 642 585C638.5 598.3 634.7 618.4 634 631.7C633.3 645 635.3 655.3 638 665C640.7 674.7 646 683.9 650 690C654 696.1 659.8 699.8 661.7 701.7L483 660C481.3 659.2 476.8 659.5 473 655C469.2 650.5 463.3 641 460 633C456.7 625 453.8 616.7 453 606.7C452.2 596.7 453.6 582.5 455 573C456.4 563.5 459.2 557.2 461.7 550C464.2 542.8 466.1 536.4 470 530C473.9 523.6 478.9 516.4 485 511.7C491.1 507 503.1 503.4 506.7 501.7Z" fill="url(#gCC)" stroke="#1a1a1a" stroke-width="0.6"/>
<path d="M692 526C688.7 527.2 678.2 528.7 672 533C665.8 537.3 660 543.3 655 552C650 560.7 645.5 571.7 642 585C638.5 598.3 634.7 618.4 634 631.7C633.3 645 635.3 655.3 638 665C640.7 674.7 646 683.9 650 690C654 696.1 659.8 699.8 661.7 701.7L700 700L700 560L712 527Z" fill="#5b5b5b" stroke="#1a1a1a" stroke-width="0.6"/>
<path d="M694 527.5C690.8 528.8 681 530.6 675 535C669 539.4 663 545.5 658 554C653 562.5 648.5 573 645 586C641.5 599 637.7 618.7 637 631.7C636.3 644.7 638.5 654.6 641 664C643.5 673.4 648.3 682 652 688C655.7 694 661.2 698 663 700" fill="none" stroke="#e8e8e8" stroke-width="1.3"/>
<path d="M696 528.5C692.8 529.8 683 532 677 536.5C671 541 664.9 547.1 660 555.5C655.1 563.9 650.9 574.3 647.5 587C644.1 599.7 640.2 619 639.5 631.7C638.8 644.5 641.1 654.4 643.5 663.5C645.9 672.6 650.4 680.6 654 686.5C657.6 692.4 663.2 696.9 665 699" fill="none" stroke="#1a1a1a" stroke-width="0.5"/>
<path d="M483 659.5L661 702.6C660.2 704.8 657 711.4 656 716C655 720.6 654.6 724.7 655 730C655.4 735.3 658 745 658.6 748L483 703C482.5 700.8 480.5 695.2 480 690C479.5 684.8 479.5 677.1 480 672C480.5 666.9 482.5 661.6 483 659.5Z" fill="url(#gLC)" stroke="#1a1a1a" stroke-width="0.6"/>
<path d="M662.5 703C661.7 705.2 658.5 711.5 657.5 716C656.5 720.5 656.1 724.7 656.5 730C656.9 735.3 659.4 745 660 748" fill="none" stroke="#e4e4e4" stroke-width="1.1"/>
<path d="M664 703.5C663.2 705.6 660 711.6 659 716C658 720.4 657.6 724.6 658 730C658.4 735.4 660.9 745.4 661.5 748.5" fill="none" stroke="#1a1a1a" stroke-width="0.5"/>
<path d="M736.7 448C735.1 450.3 729.8 457.2 727 462C724.2 466.8 721.5 471.5 720 476.7C718.5 481.9 718.8 487.8 718 493C717.2 498.2 716.3 503 715 508C713.7 513 712.5 515.5 710 523C707.5 530.5 703 541.8 700 553C697 564.2 694.1 576.9 692 590C689.9 603.1 688.2 620 687.5 631.7C686.8 643.4 687.6 652.6 688 660C688.4 667.4 690.2 671 690 676C689.8 681 687.8 685.8 687 690C686.2 694.2 686.2 697.2 685.5 701.5C684.8 705.8 683.3 711.1 683 715.5C682.7 719.9 682.9 723.9 683.7 728C684.5 732.1 687.3 738 688 740C690 741.3 695.3 746 700 748C704.7 750 710.5 752.2 716 752C721.5 751.8 730.2 747.8 733 747C731.5 745.4 725.7 741.8 723.9 737.6C722.1 733.4 722.3 726.8 722.3 722C722.3 717.2 723.3 713.3 723.9 709C724.5 704.7 725.1 700.4 726 696C726.9 691.6 728.9 689 729 682.5C729.1 676 727.1 666.6 726.7 656.7C726.3 646.8 726 633.3 726.7 623C727.4 612.7 729.3 603.8 731 595C732.7 586.2 734.1 578.7 736.7 570C739.3 561.3 743.7 551.3 746.7 543C749.8 534.7 752.5 529.4 755 520C757.5 510.6 759.8 495.4 761.7 486.7C763.7 478 765 472.4 766.7 468C768.4 463.6 769.8 462.7 772 460C774.2 457.3 778.7 453.3 780 452L776 451.3L736.7 448Z" fill="url(#gPl)" stroke="#1a1a1a" stroke-width="0.6"/>
<path d="M721 477L765 481" fill="none" stroke="#1a1a1a" stroke-width="0.5"/>
<path d="M711.5 525.5L750 531" fill="none" stroke="#1a1a1a" stroke-width="0.5"/>
<path d="M690 676L729 682.5" fill="none" stroke="#1a1a1a" stroke-width="0.5"/>
<path d="M685.5 701.5L723.9 709" fill="none" stroke="#1a1a1a" stroke-width="0.5"/>
<path d="M690 676C689.5 678.3 687.8 685.8 687 690C686.2 694.2 686.2 697.2 685.5 701.5C684.8 705.8 683.3 711.1 683 715.5C682.7 719.9 682.9 723.9 683.7 728C684.5 732.1 687.3 738 688 740C690 741.3 695.3 746 700 748C704.7 750 710.5 752.2 716 752C721.5 751.8 730.2 747.8 733 747C731.5 745.4 725.7 741.8 723.9 737.6C722.1 733.4 722.3 726.8 722.3 722C722.3 717.2 723.3 713.3 723.9 709C724.5 704.7 725.1 700.4 726 696C726.9 691.6 728.5 684.8 729 682.5Z" fill="url(#gLug)" stroke="#1a1a1a" stroke-width="0.6"/>
<path d="M685.5 701.5L723.9 709" fill="none" stroke="#1a1a1a" stroke-width="0.5"/>
<path d="M782.2 452.6C780.9 453.9 776.4 457.9 774.2 460.6C772 463.3 770.6 464.2 768.9 468.6C767.2 473.1 765.9 478.6 763.9 487.3C762 496 759.7 511.2 757.2 520.6C754.7 530 752 535.3 748.9 543.6C745.9 551.9 741.5 561.9 738.9 570.6C736.3 579.3 734.9 586.8 733.2 595.6C731.5 604.4 729.6 613.3 728.9 623.6C728.2 633.9 728.5 647.4 728.9 657.3C729.3 667.2 731.3 676.6 731.2 683.1C731.1 689.6 729.1 692.2 728.2 696.6C727.4 701 726.7 705.3 726.1 709.6C725.5 713.9 724.5 717.8 724.5 722.6C724.5 727.4 724.3 734 726.1 738.2C727.9 742.4 733.7 746 735.2 747.6" fill="none" stroke="#555" stroke-width="0.5"/>
<ellipse cx="778.5" cy="487" rx="12.5" ry="27.5" fill="#c8c8c8" stroke="#1a1a1a" stroke-width="0.6" transform="rotate(10 778.5 487)"/>
<ellipse cx="780.5" cy="487.5" rx="10.5" ry="25" fill="#585858" stroke="#1a1a1a" stroke-width="0.6" transform="rotate(10 780.5 487.5)"/>
<ellipse cx="781.5" cy="487.5" rx="9" ry="22.5" fill="none" stroke="#1a1a1a" stroke-width="0.5" transform="rotate(10 781.5 487.5)"/>
<path d="M777.1 469.8L783.1 464.9L797 465.5L800 505L789.2 506L777.1 508.3L772.3 486.6Z" fill="#262626" stroke="#1a1a1a" stroke-width="0.5"/>
<ellipse cx="796.8" cy="486.3" rx="8.6" ry="21.2" fill="#1c1c1c" stroke="#1a1a1a" stroke-width="0.6" transform="rotate(5 796.8 486.3)"/>
<path d="M777.1 469.8L789.2 471L784.3 489L772.3 486.6Z" fill="#d2d2d2" stroke="#1a1a1a" stroke-width="0.5"/>
<path d="M772.3 486.6L784.3 489L789.2 504.7L777.1 508.3Z" fill="#1e1e1e" stroke="#1a1a1a" stroke-width="0.5"/>
<path d="M777.1 469.8L783.1 464.9L796.4 466.1L789.2 471Z" fill="#2a2a2a" stroke="#1a1a1a" stroke-width="0.5"/>
<path d="M789.2 471L791 478L787.5 489.5L784.3 489Z" fill="#6a6a6a" stroke="#1a1a1a" stroke-width="0.4"/>
<path d="M846 556C848.3 554.7 855.5 549.5 860 548C864.5 546.5 869.3 544.2 873 547C876.7 549.8 879.7 556.2 882 565C884.3 573.8 886.7 588.3 887 600C887.3 611.7 886.5 625 884 635C881.5 645 876.7 654.2 872 660C867.3 665.8 861.3 668 856 670C850.7 672 842.7 671.7 840 672L816.7 668L846 590Z" fill="url(#gCap)" stroke="#1a1a1a" stroke-width="0.6"/>
<ellipse cx="865.5" cy="608.5" rx="21" ry="62" fill="#151515" stroke="#1a1a1a" stroke-width="0.7" transform="rotate(8.5 865.5 608.5)"/>
<path d="M773 560L803 529L836 533L843 543L820 553.5L808 565Z" fill="#2b2b2b" stroke="#1a1a1a" stroke-width="0.6"/>
<path d="M773 560L816 564L800 636.7L763 628Z" fill="url(#gHx1)" stroke="#1a1a1a" stroke-width="0.6"/>
<path d="M763 628L800 636.7L816.7 668L780 660Z" fill="#1e1e1e" stroke="#1a1a1a" stroke-width="0.6"/>
<path d="M820 553.5L843 543L873 546.7L846.7 557Z" fill="#282828" stroke="#1a1a1a" stroke-width="0.6"/>
<path d="M820 553.5L846.7 557L848 583L831.7 620.8L802.5 616L816 564Z" fill="url(#gHx2)" stroke="#1a1a1a" stroke-width="0.6"/>
<path d="M802.5 616L831.7 620.8L843 645L845 667L816.7 668L800 636.7Z" fill="#1c1c1c" stroke="#1a1a1a" stroke-width="0.6"/>
<path d="M848 583L831.7 620.8L843 645L852 620Z" fill="#2e2e2e" stroke="#1a1a1a" stroke-width="0.5"/>
<path d="M756 713L784.5 721C785.1 721.6 787.5 722.7 788 724.5C788.5 726.3 788.2 729.7 787.5 732C786.8 734.3 784.6 737.4 784 738.5L758 732Z" fill="#161616" stroke="#1a1a1a" stroke-width="0.6"/>
<path d="M760 714.3L761 732.6" fill="none" stroke="#555" stroke-width="0.7"/>
<path d="M763 715.1L764 733.3" fill="none" stroke="#555" stroke-width="0.7"/>
<path d="M766 716L767 734" fill="none" stroke="#555" stroke-width="0.7"/>
<path d="M769 716.8L770 734.7" fill="none" stroke="#555" stroke-width="0.7"/>
<path d="M772 717.7L773 735.4" fill="none" stroke="#555" stroke-width="0.7"/>
<path d="M775 718.5L776 736.1" fill="none" stroke="#555" stroke-width="0.7"/>
<path d="M778 719.4L779 736.8" fill="none" stroke="#555" stroke-width="0.7"/>
<path d="M781 720.2L782 737.5" fill="none" stroke="#555" stroke-width="0.7"/>
<path d="M784 721.1L785 738.2" fill="none" stroke="#555" stroke-width="0.7"/>
<path d="M740 698.7L757.5 703.7L765 720L760 737.5L747.5 742.5L733.7 732.5L730 715Z" fill="#242424" stroke="#1a1a1a" stroke-width="0.7"/>
<ellipse cx="738" cy="721" rx="10" ry="21" fill="none" stroke="#1a1a1a" stroke-width="0.5" transform="rotate(8 738 721)"/>
<path d="M734 710L750 707L751 725L736 728Z" fill="#e4e4e4" stroke="#1a1a1a" stroke-width="0.5"/>
<path d="M736 728L751 725L754 738L745 741Z" fill="#303030" stroke="#1a1a1a" stroke-width="0.5"/>
<path d="M750 707L757.5 703.7L765 720L751 725Z" fill="#2a2a2a" stroke="#1a1a1a" stroke-width="0.5"/>
<ellipse cx="683" cy="745" rx="11" ry="17" fill="#5b5b5b" stroke="#1a1a1a" stroke-width="0.6" transform="rotate(-25 683 745)"/>
<ellipse cx="696" cy="760" rx="10" ry="15" fill="#5b5b5b" stroke="#1a1a1a" stroke-width="0.6" transform="rotate(-25 696 760)"/>
<ellipse cx="680" cy="742" rx="7.5" ry="8.5" fill="url(#gBall)" stroke="#1a1a1a" stroke-width="0.6"/>
<ellipse cx="693.5" cy="758" rx="7.5" ry="8.5" fill="url(#gBall2)" stroke="#1a1a1a" stroke-width="0.6"/>
<path d="M674 746L686 744" fill="none" stroke="#111" stroke-width="0.7"/>
<path d="M687.5 762L699.5 760" fill="none" stroke="#111" stroke-width="0.7"/>
<ellipse cx="603" cy="772" rx="7" ry="9" fill="#4a4a4a" stroke="#1a1a1a" stroke-width="0.6" transform="rotate(-20 603 772)"/>
<path d="M598 767L603 765L606 773L601 776Z" fill="#d0d0d0" stroke="#1a1a1a" stroke-width="0.4"/>
<path d="M365 626L376 612L385 636.7L396.7 660L403 664L533 791.7L531 794L505.7 840L439.5 876L409 878L409 840L365 880Z" fill="url(#gLB)" stroke="#1a1a1a" stroke-width="0.6"/>
<path d="M403 664L432 671L552.6 794L533 791.7Z" fill="#383838" stroke="#1a1a1a" stroke-width="0.6"/>
<path d="M407.5 691.4L424.3 690L497 760L494.8 765Z" fill="#3a3a3a" stroke="#1a1a1a" stroke-width="0.5"/>
<path d="M400 662.5L534 792" fill="none" stroke="#a8680e" stroke-width="2.4"/>
<path d="M399 663.4L533 793" fill="none" stroke="#3a2004" stroke-width="0.5"/>
<path d="M401.2 661.6L535 791" fill="none" stroke="#3a2004" stroke-width="0.5"/>
<path d="M381.7 657L396 660C397.3 662 401 668 404 672C407 676 410.8 681 414 684C417.2 687 421.5 689 423 690C421.2 690.3 415.8 692 412 692C408.2 692 403.3 691.3 400 690C396.7 688.7 394.5 687 392 684C389.5 681 386.7 676.5 385 672C383.3 667.5 382.2 659.5 381.7 657Z" fill="url(#gBo1)" stroke="#1a1a1a" stroke-width="0.5"/>
<path d="M396 660C396.3 662 396.7 668.2 398 672C399.3 675.8 401.3 680 404 683C406.7 686 412.3 688.8 414 690" fill="none" stroke="#1a1a1a" stroke-width="0.5"/>
<path d="M470.8 754L494 759C495 760.8 497.7 766.5 500 770C502.3 773.5 505.7 777.6 508 780C510.3 782.4 513 783.8 514 784.5L490 783C488.7 782.5 484.7 782.2 482 780C479.3 777.8 475.9 774.3 474 770C472.1 765.7 471.3 756.7 470.8 754Z" fill="url(#gBo2)" stroke="#1a1a1a" stroke-width="0.5"/>
<path d="M494 759C494.2 760.8 494 766.7 495 770C496 773.3 498 776.5 500 779C502 781.5 505.8 784 507 785" fill="none" stroke="#1a1a1a" stroke-width="0.5"/>
<path d="M490 783L516.5 787L499.7 818L475.6 810Z" fill="#ffffff" stroke="#1a1a1a" stroke-width="0.5"/>
<path d="M516.5 787L531 794L505.7 840L504.5 818Z" fill="#676767" stroke="#1a1a1a" stroke-width="0.5"/>
<path d="M409 842L475.6 810L504.5 818L439.5 852Z" fill="#7e7e7e" stroke="#1a1a1a" stroke-width="0.5"/>
<path d="M439.5 852L504.5 818L505.7 840L439.5 876Z" fill="#686868" stroke="#1a1a1a" stroke-width="0.5"/>
<path d="M439.5 852L439.5 876C437.9 876.7 433.6 879.2 430 880C426.4 880.8 421.5 881.3 418 881C414.5 880.7 410.5 878.5 409 878L409 854C410.5 854.3 414.5 855.8 418 856C421.5 856.2 426.4 855.7 430 855C433.6 854.3 437.9 852.5 439.5 852Z" fill="url(#gFt)" stroke="#1a1a1a" stroke-width="0.5"/>
<path d="M409 842L439.5 852C437.9 852.5 433.6 854.3 430 855C426.4 855.7 421.5 856.2 418 856C414.5 855.8 410.5 854.3 409 854Z" fill="#868686" stroke="#1a1a1a" stroke-width="0.5"/>
<path d="M365 625L388 686.7L388 790L408 810L410 881.7L370 900.8L351.7 891.7L363 881.7L361 640Z" fill="url(#gBP)" stroke="#1a1a1a" stroke-width="0.6"/>
<path d="M370 900.8L370 650" fill="none" stroke="#555" stroke-width="0.4"/>
<path d="M181.7 579L363 623L365 640L358 645L346.7 626L188 587.5Z" fill="#b0b0b0" stroke="#1a1a1a" stroke-width="0.5"/>
<path d="M323 655L358 645L361.7 750L363 881.7L330 896L329 903L326.7 750Z" fill="url(#gPS)" stroke="#1a1a1a" stroke-width="0.6"/>
<path d="M330 896L363 881.7L361 889L332 902Z" fill="#bdbdbd" stroke="#1a1a1a" stroke-width="0.4"/>
<path d="M346.7 626C348.1 627.2 352.9 629.8 355 633C357.1 636.2 358.8 643 359.5 645L361.7 750L363.5 880" fill="none" stroke="#c4861c" stroke-width="1.0"/>
<path d="M155 596L188 587.5L346.7 626L313 636Z" fill="#a2a2a2" stroke="#1a1a1a" stroke-width="0.6"/>
<path d="M313 636L346.7 626L358 645L323 655Z" fill="url(#gPC)" stroke="#1a1a1a" stroke-width="0.6"/>
<path d="M148.5 606C148.8 604.8 148.8 600.7 150 599C151.2 597.3 155 596.5 156 596L311 635.5C312.3 636.2 317 636.8 319 640C321 643.2 322.3 652.5 323 655L326.7 750L329.5 898C329.2 899.2 329.4 903.4 328 905C326.6 906.6 322.2 907.1 321 907.5L173 836.7C171.7 836.1 166.8 834.8 165 833C163.2 831.2 162.5 827.2 162 826L155 750Z" fill="url(#gPF)" stroke="#1a1a1a" stroke-width="0.7"/>
<ellipse cx="236" cy="739" rx="47" ry="75" fill="#8a8a8a" stroke="#1a1a1a" stroke-width="0.8" transform="rotate(-11 236 739)"/>
<g clip-path="url(#cHole)">
<ellipse cx="239.5" cy="738.3" rx="43.7" ry="73" fill="#fdfdfd" stroke="#1a1a1a" stroke-width="1.5" transform="rotate(-12.1 239.5 738.3)" stroke="#303030"/>
<ellipse cx="243" cy="737.6" rx="40.3" ry="71" fill="#fdfdfd" stroke="#1a1a1a" stroke-width="1.5" transform="rotate(-13.1 243 737.6)" stroke="#303030"/>
<ellipse cx="246.4" cy="737" rx="37" ry="69" fill="#fdfdfd" stroke="#1a1a1a" stroke-width="1.5" transform="rotate(-14.2 246.4 737)" stroke="#303030"/>
<ellipse cx="249.9" cy="736.3" rx="33.7" ry="67" fill="#fdfdfd" stroke="#1a1a1a" stroke-width="1.5" transform="rotate(-15.3 249.9 736.3)" stroke="#303030"/>
<ellipse cx="253.4" cy="735.6" rx="30.3" ry="65" fill="#fdfdfd" stroke="#1a1a1a" stroke-width="1.5" transform="rotate(-16.3 253.4 735.6)" stroke="#303030"/>
<path d="M189 716C189.5 712 189.7 699 192 692C194.3 685 198.7 678.3 203 674C207.3 669.7 213.2 667 218 666C222.8 665 228.7 666.5 232 668C235.3 669.5 237 673.6 238 674.7C236.4 676.7 230.7 681.1 228.5 686.5C226.3 691.9 225.2 701.1 224.6 707C224 712.9 224.9 719.5 225 722C223.2 723.3 218.2 729.3 214 730C209.8 730.7 204.2 728.3 200 726C195.8 723.7 190.8 717.7 189 716Z" fill="#7c7c7c" opacity="0.45"/>
<path d="M238 674.7C233.6 677.1 230.7 681.1 228.5 686.5C226.3 691.9 225.1 700.4 224.6 707C224.1 713.6 224.2 719.4 225.4 725.9C226.6 732.4 228.8 739.8 231.7 746.3C234.6 752.8 238.5 759.4 242.7 765.2C246.9 771 251.4 776 256.9 781C262.4 786 270.3 793.5 275.8 795C281.3 796.5 286.8 797.5 290 790C293.2 782.5 295 762.5 295 750C295 737.5 293.3 725 290 715C286.7 705 280.8 697.2 275 690C269.2 682.8 261.2 674.5 255 672C248.8 669.5 242.4 672.3 238 674.7Z" fill="url(#gBore)" stroke="#1a1a1a" stroke-width="0.8"/>
<path d="M238 674.7C236.4 676.7 230.7 681.1 228.5 686.5C226.3 691.9 225.1 700.4 224.6 707C224.1 713.6 224.2 719.4 225.4 725.9C226.6 732.4 228.8 739.8 231.7 746.3C234.6 752.8 238.5 759.4 242.7 765.2C246.9 771 251.4 776 256.9 781C262.4 786 272.6 792.7 275.8 795L277.4 793.6C275 791.5 267.5 785.8 263 781C258.5 776.2 254.5 771.6 250.6 765C246.7 758.4 242.2 749.4 239.6 741.6C237 733.8 235.3 725.9 234.8 718C234.3 710.1 235.4 701.2 236.4 694.4C237.4 687.6 240.2 679.9 241 677Z" fill="url(#gSeal)" stroke="#1a1a1a" stroke-width="0.6"/>
<path d="M239.5 676C238.3 678.3 234.2 684.3 232.5 690C230.8 695.7 229.8 703 229.6 710C229.4 717 229.8 725 231.5 732C233.2 739 236.6 745.7 240 752C243.4 758.3 247.7 764.5 252 770C256.3 775.5 261.9 781 266 785C270.1 789 274.8 792.8 276.6 794.3" fill="none" stroke="#5a3a08" stroke-width="0.7"/>
<path d="M269.5 707L277.5 745" fill="none" stroke="#3a3a3a" stroke-width="0.5"/>
</g>
<ellipse cx="236" cy="739" rx="47" ry="75" fill="none" stroke="#1a1a1a" stroke-width="0.8" transform="rotate(-11 236 739)"/>
<ellipse cx="163.8" cy="629.6" rx="17.6" ry="21.9" fill="#8c8c8c" stroke="#1a1a1a" stroke-width="0.8" transform="rotate(-10 163.8 629.6)"/>
<ellipse cx="163.4" cy="629.8" rx="15.8" ry="20.2" fill="#4a4a4a" stroke="#1a1a1a" stroke-width="0.5" transform="rotate(-10 163.4 629.8)"/>
<path d="M151.7 615L163 612.2L170.3 615.4L177.8 633.8L173.1 645.7L165.8 648.9L159.4 647.3L150 638.3L146.8 625.8Z" fill="#1e1e1e" stroke="#1a1a1a" stroke-width="0.7"/>
<path d="M151.7 615L163 612.2L170.3 615.4L164.6 618.2L156.8 618.2Z" fill="#212121" stroke="#1a1a1a" stroke-width="0.5"/>
<path d="M164.6 618.2L170.3 615.4L177.8 633.8L170.3 635.4L165.8 629.5Z" fill="#1b1b1b" stroke="#1a1a1a" stroke-width="0.5"/>
<path d="M170.3 635.4L177.8 633.8L173.1 645.7L165.8 648.9L165.3 643.6Z" fill="#1d1d1d" stroke="#1a1a1a" stroke-width="0.5"/>
<path d="M165.8 629.5L170.3 635.4L165.8 642.5Z" fill="#505050" stroke="#1a1a1a" stroke-width="0.4"/>
<ellipse cx="156.2" cy="632.8" rx="9.6" ry="15.2" fill="#272727" stroke="#1a1a1a" stroke-width="0.7" transform="rotate(-8 156.2 632.8)"/>
<path d="M157.9 618.2L164.2 618.7L163.6 624.2Z" fill="#f6f6f6"/>
<ellipse cx="295" cy="667.5" rx="20.7" ry="26.3" fill="#8c8c8c" stroke="#1a1a1a" stroke-width="0.8" transform="rotate(-10 295 667.5)"/>
<ellipse cx="294.5" cy="667.7" rx="18.6" ry="24.2" fill="#4a4a4a" stroke="#1a1a1a" stroke-width="0.5" transform="rotate(-10 294.5 667.7)"/>
<path d="M280.7 650L294 646.7L302.6 650.5L311.4 672.6L305.9 686.8L297.2 690.7L289.8 688.8L278.8 678L275 663Z" fill="#1e1e1e" stroke="#1a1a1a" stroke-width="0.7"/>
<path d="M280.7 650L294 646.7L302.6 650.5L295.9 653.8L286.8 653.8Z" fill="#212121" stroke="#1a1a1a" stroke-width="0.5"/>
<path d="M295.9 653.8L302.6 650.5L311.4 672.6L302.6 674.5L297.2 667.4Z" fill="#1b1b1b" stroke="#1a1a1a" stroke-width="0.5"/>
<path d="M302.6 674.5L311.4 672.6L305.9 686.8L297.2 690.7L296.7 684.3Z" fill="#1d1d1d" stroke="#1a1a1a" stroke-width="0.5"/>
<path d="M297.2 667.4L302.6 674.5L297.2 683Z" fill="#505050" stroke="#1a1a1a" stroke-width="0.4"/>
<ellipse cx="286" cy="671.3" rx="11.3" ry="18.2" fill="#272727" stroke="#1a1a1a" stroke-width="0.7" transform="rotate(-8 286 671.3)"/>
<path d="M288 653.8L295.4 654.4L294.8 661Z" fill="#f6f6f6"/>
<ellipse cx="174.8" cy="813.6" rx="17.6" ry="23" fill="#8c8c8c" stroke="#1a1a1a" stroke-width="0.8" transform="rotate(-10 174.8 813.6)"/>
<ellipse cx="174.4" cy="813.7" rx="15.8" ry="21.2" fill="#4a4a4a" stroke="#1a1a1a" stroke-width="0.5" transform="rotate(-10 174.4 813.7)"/>
<path d="M162.7 798.2L174 795.4L181.3 798.7L188.8 818L184.1 830.5L176.8 833.9L170.4 832.2L161 822.8L157.8 809.6Z" fill="#1e1e1e" stroke="#1a1a1a" stroke-width="0.7"/>
<path d="M162.7 798.2L174 795.4L181.3 798.7L175.6 801.6L167.8 801.6Z" fill="#212121" stroke="#1a1a1a" stroke-width="0.5"/>
<path d="M175.6 801.6L181.3 798.7L188.8 818L181.3 819.7L176.8 813.5Z" fill="#1b1b1b" stroke="#1a1a1a" stroke-width="0.5"/>
<path d="M181.3 819.7L188.8 818L184.1 830.5L176.8 833.9L176.3 828.3Z" fill="#1d1d1d" stroke="#1a1a1a" stroke-width="0.5"/>
<path d="M176.8 813.5L181.3 819.7L176.8 827.1Z" fill="#505050" stroke="#1a1a1a" stroke-width="0.4"/>
<ellipse cx="167.2" cy="816.9" rx="9.6" ry="15.9" fill="#272727" stroke="#1a1a1a" stroke-width="0.7" transform="rotate(-8 167.2 816.9)"/>
<path d="M168.9 801.6L175.2 802.1L174.6 807.9Z" fill="#f6f6f6"/>
<ellipse cx="302.6" cy="872.5" rx="20.1" ry="27.4" fill="#8c8c8c" stroke="#1a1a1a" stroke-width="0.8" transform="rotate(-10 302.6 872.5)"/>
<ellipse cx="302.2" cy="872.7" rx="18.1" ry="25.2" fill="#4a4a4a" stroke="#1a1a1a" stroke-width="0.5" transform="rotate(-10 302.2 872.7)"/>
<path d="M288.7 854.2L301.7 850.8L310.1 854.8L318.7 877.8L313.3 892.6L304.9 896.6L297.6 894.7L286.8 883.4L283.1 867.8Z" fill="#1e1e1e" stroke="#1a1a1a" stroke-width="0.7"/>
<path d="M288.7 854.2L301.7 850.8L310.1 854.8L303.6 858.2L294.6 858.2Z" fill="#212121" stroke="#1a1a1a" stroke-width="0.5"/>
<path d="M303.6 858.2L310.1 854.8L318.7 877.8L310.1 879.8L304.9 872.4Z" fill="#1b1b1b" stroke="#1a1a1a" stroke-width="0.5"/>
<path d="M310.1 879.8L318.7 877.8L313.3 892.6L304.9 896.6L304.3 890Z" fill="#1d1d1d" stroke="#1a1a1a" stroke-width="0.5"/>
<path d="M304.9 872.4L310.1 879.8L304.9 888.6Z" fill="#505050" stroke="#1a1a1a" stroke-width="0.4"/>
<ellipse cx="293.9" cy="876.4" rx="11.1" ry="19" fill="#272727" stroke="#1a1a1a" stroke-width="0.7" transform="rotate(-8 293.9 876.4)"/>
<path d="M295.8 858.2L303.1 858.8L302.4 865.7Z" fill="#f6f6f6"/>
</svg>

  </div>
  <div id="ltool">
<div style="position:absolute;left:6px;top:9px;width:19px;height:19px;border:1px solid #0a78d4;background:#cde4f6"></div>
<svg style="position:absolute;left:0;top:0" width="948" height="37" viewBox="7 1035 948 37">
<defs>
<radialGradient id="gBlue" cx="0.4" cy="0.35" r="0.65"><stop offset="0" stop-color="#ffffff"/><stop offset="0.25" stop-color="#8fb4ff"/><stop offset="0.6" stop-color="#2a5ae0"/><stop offset="1" stop-color="#0a2a90"/></radialGradient>
<radialGradient id="gGrey" cx="0.4" cy="0.35" r="0.65"><stop offset="0" stop-color="#ffffff"/><stop offset="0.6" stop-color="#d4d4d4"/><stop offset="1" stop-color="#b0b0b0"/></radialGradient>
</defs>
<!-- rotate -->
<g fill="none" stroke="#2b2b2b" stroke-width="1.5" stroke-linecap="butt">
<path d="M17.3 1050.2 C19.5 1046.6 26 1046.4 28.6 1050.4"/>
<path d="M28.4 1057.2 C26 1061 19.6 1061 17 1057.4"/>
</g>
<path d="M26.2 1052.6 L29.9 1048.2 L30 1054 Z" fill="#2b2b2b"/>
<path d="M19.6 1055 L15.8 1059.4 L15.7 1053.6 Z" fill="#2b2b2b"/>
<circle cx="22.8" cy="1053.6" r="3" fill="url(#gBlue)"/>
<!-- zoom -->
<circle cx="43.9" cy="1052" r="4.7" fill="none" stroke="#3a3a3a" stroke-width="1.1"/>
<path d="M41.4 1052 H46.4 M43.9 1049.5 V1054.5" stroke="#2b2b2b" stroke-width="1.3" fill="none"/>
<path d="M47.4 1055.6 L51.7 1060.4" stroke="#3a3a3a" stroke-width="1.6" fill="none"/>
<!-- pan -->
<circle cx="67.6" cy="1053.7" r="2.8" fill="url(#gBlue)"/>
<g fill="#3a3a3a">
<path d="M67.6 1047 L70 1050 L65.2 1050 Z"/>
<path d="M67.6 1060.6 L70 1057.6 L65.2 1057.6 Z"/>
<path d="M60.8 1053.8 L63.8 1051.4 L63.8 1056.2 Z"/>
<path d="M74.6 1053.8 L71.6 1051.4 L71.6 1056.2 Z"/>
</g>
<!-- fit -->
<rect x="86.5" y="1047.6" width="13" height="13" fill="none" stroke="#333" stroke-width="1"/>
<rect x="89.9" y="1051" width="6.2" height="6.2" fill="#fff" stroke="#8a8a8a" stroke-width="1"/>
<g stroke="#333" stroke-width="1.2">
<path d="M88 1049.1 L89.3 1050.4 M98 1049.1 L96.7 1050.4 M88 1059.1 L89.3 1057.8 M98 1059.1 L96.7 1057.8"/>
</g>
<!-- path/X (disabled) -->
<path d="M885.6 1047.8 L891.4 1053.6 M891.4 1047.8 L885.6 1053.6" stroke="#a0a0a0" stroke-width="1.7" fill="none"/>
<path d="M893 1048 C896 1049 896.6 1052 896.4 1055" stroke="#b8b8b8" stroke-width="0.9" stroke-dasharray="1 1.2" fill="none"/>
<path d="M888 1054.5 C887.6 1057.5 886.5 1059.5 885 1060.8" stroke="#b8b8b8" stroke-width="0.9" stroke-dasharray="1 1.2" fill="none"/>
<circle cx="896.4" cy="1058" r="2.6" fill="url(#gGrey)" stroke="#c4c4c4" stroke-width="0.5"/>
<!-- gear -->
<g transform="translate(917 1054)">
<g fill="#565656">
<rect x="-1.5" y="-7" width="3" height="14"/>
<rect x="-1.5" y="-7" width="3" height="14" transform="rotate(45)"/>
<rect x="-1.5" y="-7" width="3" height="14" transform="rotate(90)"/>
<rect x="-1.5" y="-7" width="3" height="14" transform="rotate(135)"/>
</g>
<circle r="5" fill="#565656"/>
<circle r="3.2" fill="#8e8e8e"/>
<circle r="1.9" fill="#f2f2f2"/>
</g>
<text x="935.2" y="1061" font-family="Liberation Sans, sans-serif" font-weight="bold" font-size="19" fill="#454545" letter-spacing="0">?</text>
</svg>

  </div>
</div>

<div class="grip" style="left:958px"></div>
<div class="grip" style="left:961px"></div>

<!-- ================= RIGHT: tabs + parts ================= -->
<div class="tab" style="left:970px;width:70px">Document</div>
<div class="tab" style="left:1043px;width:76px">Instructions</div>
<div class="tab on" style="left:1122px;width:48px;text-indent:-3px;letter-spacing:-0.75px">Parts</div>
<div class="tab" style="left:1173px;width:74px;letter-spacing:-0.8px">Parameters</div>

<div id="parts">
  <div class="row d" style="top:6px"><span class="cb ck"><svg width="10" height="10" viewBox="0 0 10 10" style="position:absolute;left:0;top:0"><path d="M1.6 5.2 L4 7.6 L8.6 2.2" fill="none" stroke="#fff" stroke-width="1.7"/></svg></span><span class="lb">Bolt, Hex Head, type 1 (10)</span><span class="meta">Meta</span></div>
  <div class="row" style="top:41px"><span class="cb"></span><span class="lb">Bolt, Hex Head, type 1 (11)</span><span class="meta">Meta</span></div>
  <div class="row d" style="top:76px"><span class="cb"></span><span class="lb">Bolt, Hex Head, type 1 (12)</span><span class="meta">Meta</span></div>
  <div class="row" style="top:111px"><span class="cb"></span><span class="lb">Bolt, Hex Head, type 1 (13)</span><span class="meta">Meta</span></div>
  <div class="row d" style="top:146px"><span class="cb"></span><span class="lb">Bolt, Hex Head, type 1 (9)</span><span class="meta">Meta</span></div>
  <div class="row" style="top:181px"><span class="cb"></span><span class="lb">Gasket, Case (2)</span><span class="meta">Meta</span></div>
  <div class="row d" style="top:216px"><span class="cb"></span><span class="lb">Gear (1)</span><span class="meta">Meta</span></div>
  <div class="row" style="top:251px"><span class="cb"></span><span class="lb">Gear (2)</span><span class="meta">Meta</span></div>
  <div class="row d" style="top:286px"><span class="cb"></span><span class="lb">Screw, Adjustment, type 1</span><span class="meta">Meta</span></div>
</div>

<div class="box" style="top:683px;height:45px"></div>

<div class="box" style="top:740px;height:284px">
  <div class="q" style="top:13px">These bolts connect the pump valve sub-assembly to the main pump housing.</div>
  <div class="q teal" style="top:41px;letter-spacing:-0.48px">Choose the correct answer in the Choice list(s).</div>
  <div class="q teal" style="top:69px">Click <b>Submit</b> to confirm. Click <b>Cancel</b> to refuse.</div>
  <div class="q" style="top:110px;font-weight:bold;letter-spacing:-0.5px">What tool should be used to remove the bolts?</div>

  <span class="rad" style="top:134px"></span><div class="opt" style="top:132px">No. 14 Wrench</div>
  <span class="rad on" style="top:156px"></span><div class="opt" style="top:154px;text-decoration:underline">No. 15 Wrench</div>
  <span class="rad" style="top:178px"></span><div class="opt" style="top:176px">Adjustable Spanner</div>
  <span class="rad" style="top:200px"></span><div class="opt" style="top:198px">Hammer &amp; Screwdriver</div>
  <span class="rad" style="top:222px"></span><div class="opt" style="top:220px">Mole Grips</div>

  <div class="btn" style="left:12px;top:247px;width:61px;border-color:#111;box-shadow:0 0 0 0.25px #111">Submit</div>
  <div class="btn" style="left:79px;top:247px;width:61px">Cancel</div>
</div>

<div id="tip">Submit operation</div>

<div id="rbar">
  <div class="abs" style="left:6px;top:12px;line-height:16px;white-space:nowrap">Test result:</div>
  <div class="abs" style="left:69px;top:11px;width:12px;height:16px;background:#000"></div>
  <div class="abs" style="left:81px;top:11px;width:388px;height:16px;background:linear-gradient(90deg,#00ff00,#ff0000)"></div>
  <div class="btn" style="left:836px;top:7px;width:102px;border-color:#8a8a8a">Switch off mode</div>
</div>

</body>
</html>
